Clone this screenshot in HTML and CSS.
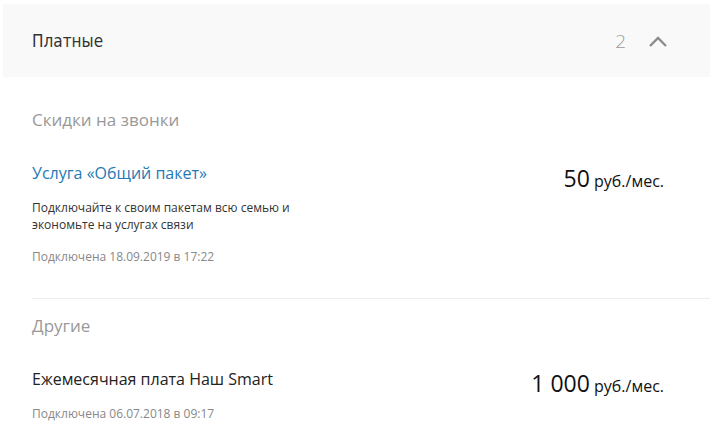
FILE: index.html
```html
<!DOCTYPE html>
<html lang="ru">

<head>
    <meta charset="utf-8">
    <title>Платные услуги</title>
    <link rel="stylesheet" href="styles.css">
</head>

<body>
    <div class="panel">
        <div class="panel-head">
            <span class="panel-title">Платные</span>
            <span class="panel-count">2</span>
            <svg class="chevron" width="20" height="12" viewBox="0 0 20 12">
                <path d="M2 11 L10 3 L18 11" fill="none" stroke="#8c8c8c" stroke-width="2.4" />
            </svg>
        </div>

        <div class="panel-body">
            <div class="group">
                <h2 class="group-title">Скидки на звонки</h2>
                <div class="service">
                    <div class="service-info">
                        <a class="service-name link" href="#">Услуга «Общий пакет»</a>
                        <p class="service-desc">Подключайте к своим пакетам всю семью и экономьте на услугах связи</p>
                        <p class="service-date">Подключена 18.09.2019 в 17:22</p>
                    </div>
                    <div class="service-price"><b>50</b> руб./мес.</div>
                </div>
            </div>

            <div class="group">
                <h2 class="group-title">Другие</h2>
                <div class="service">
                    <div class="service-info">
                        <span class="service-name">Ежемесячная плата Наш Smart</span>
                        <p class="service-date">Подключена 06.07.2018 в 09:17</p>
                    </div>
                    <div class="service-price"><b>1 000</b> руб./мес.</div>
                </div>
            </div>
        </div>
    </div>
</body>

</html>
```

FILE: styles.css
```css
* {
    box-sizing: border-box;
    margin: 0;
    padding: 0;
}

body {
    font-family: "Open Sans", "Liberation Sans", sans-serif;
    color: #222;
    background: #fff;
}

.panel {
    padding: 4px 4px 0 3px;
}

.panel-head {
    display: flex;
    align-items: center;
    height: 73px;
    padding: 0 42px 0 29px;
    background-color: #f9f9f9;
}

.panel-title {
    flex: 1;
    font-family: "DejaVu Sans Condensed", "DejaVu Sans", sans-serif;
    font-size: 17px;
    color: #333;
}

.panel-count {
    font-size: 19px;
    font-weight: 300;
    color: #999;
    margin-right: 22px;
}

.chevron {
    display: block;
}

.panel-body {
    padding: 0 0 0 29px;
}

.group {
    padding-top: 31px;
}

.group + .group {
    border-top: 1px solid #eee;
    margin-top: 33px;
    padding-top: 15px;
}

.group-title {
    font-size: 17px;
    font-weight: 400;
    color: #999;
    line-height: 24px;
}

.service {
    display: flex;
    align-items: flex-start;
    padding-right: 46px;
    margin-top: 30px;
}

.group + .group .service {
    margin-top: 30px;
}

.service-info {
    flex: 1;
}

.service-name {
    display: block;
    font-size: 16px;
    line-height: 22px;
    color: #222;
    text-decoration: none;
}

.service-name.link {
    color: #1f7ab5;
}

.service-desc {
    width: 280px;
    margin-top: 15px;
    font-size: 12px;
    line-height: 17px;
    color: #333;
}

.service-date {
    margin-top: 15px;
    font-size: 12px;
    line-height: 17px;
    color: #888;
}

.service-price {
    font-size: 16px;
    color: #111;
}

.group + .group .service-price {
    margin-top: -1px;
}

.service-price b {
    font-size: 23px;
    font-weight: 400;
}
```
